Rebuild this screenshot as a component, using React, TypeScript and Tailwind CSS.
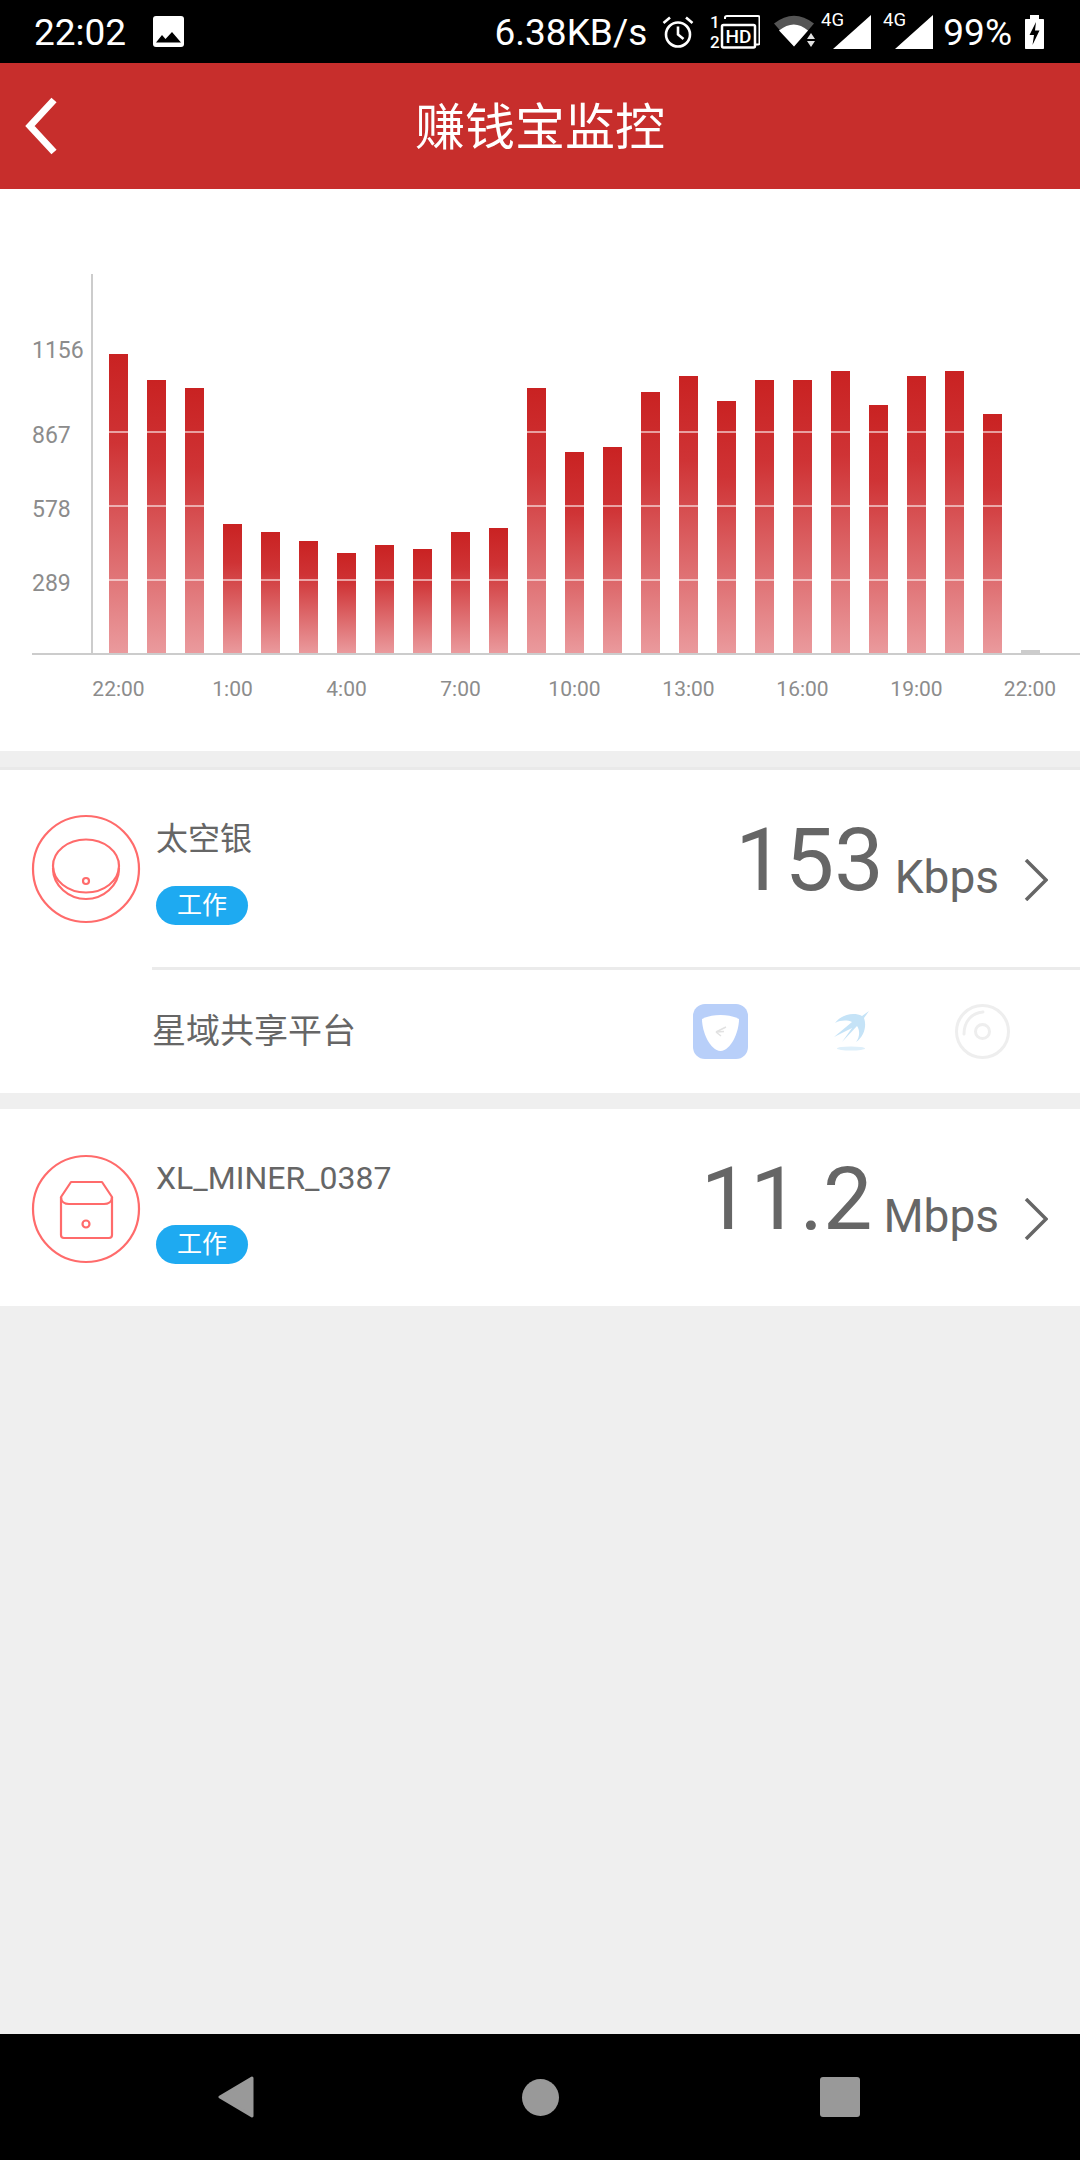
import React from 'react';

const BAR_TOPS = [354, 380, 388, 524, 532, 541, 553, 545, 549, 532, 528, 388, 452, 447, 392, 376, 401, 380, 380, 371, 405, 376, 371, 414];
const X_LABELS = ['22:00', '1:00', '4:00', '7:00', '10:00', '13:00', '16:00', '19:00', '22:00'];
const Y_LABELS = [
  { text: '1156', y: 358 },
  { text: '867', y: 443 },
  { text: '578', y: 517 },
  { text: '289', y: 591 },
];
const BASE_Y = 653;

const Chart = () => (
  <svg width="1080" height="562" viewBox="0 189 1080 562" className="block">
    <defs>
      <linearGradient id="barFill" x1="0" y1="0" x2="0" y2="1">
        <stop offset="0" stopColor="#c92222" />
        <stop offset="0.3" stopColor="#cf3335" />
        <stop offset="1" stopColor="#ea9a9d" />
      </linearGradient>
    </defs>
    {BAR_TOPS.map((top, i) => (
      <rect key={i} x={109 + i * 38} y={top} width="19" height={BASE_Y - top} fill="url(#barFill)" />
    ))}
    <rect x="1021" y="650" width="19" height="4" fill="#cccccc" />
    {[431, 505, 579].map((y) => (
      <rect key={y} x="93" y={y} width="910" height="2" fill="#ffffff" fillOpacity="0.55" />
    ))}
    <rect x="91" y="274" width="2" height="380" fill="#cccccc" />
    <rect x="32" y="653" width="1048" height="2" fill="#cccccc" />
    {Y_LABELS.map((l) => (
      <text key={l.text} x="32" y={l.y} fontSize="23" fill="#8c8c8c">{l.text}</text>
    ))}
    {X_LABELS.map((l, i) => (
      <text key={i} x={i === 8 ? 1030 : 118.5 + i * 114} y="695.5" fontSize="21" fill="#8c8c8c" textAnchor="middle">{l}</text>
    ))}
  </svg>
);

const ImageIcon = () => (
  <svg width="31" height="31" viewBox="0 0 31 31" className="ml-[27px]">
    <rect width="31" height="31" rx="3" fill="#ffffff" />
    <path d="M3 26.5L9 19L12.5 23L19 16L28 26.5Z" fill="#000000" />
  </svg>
);

const AlarmIcon = () => (
  <svg width="32" height="32" viewBox="0 0 32 32" fill="none" stroke="#ffffff" strokeWidth="2.6" className="ml-[15px]">
    <circle cx="16" cy="18.5" r="12" />
    <path d="M16 10.5V18.5L21.5 23" />
    <path d="M1.5 7L8 1.5M30.5 7L24 1.5" />
  </svg>
);

const DualHdIcon = () => (
  <svg width="50" height="42" viewBox="0 -4 50 42" className="ml-[16px]">
    <text x="0" y="13" fontSize="17" fontWeight="500" fill="#ffffff">1</text>
    <text x="0" y="33" fontSize="17" fontWeight="500" fill="#ffffff">2</text>
    <path d="M15 4V2.5C15 1.5 16 1 17 1H48C49 1 49.500 1.500 49.500 2.500V28C49.500 29 49 29.500 48 29.500H46" fill="none" stroke="#ffffff" strokeWidth="2" />
    <rect x="12" y="10" width="33" height="22.500" rx="1.500" fill="#000000" stroke="#ffffff" strokeWidth="2.500" />
    <text x="28.500" y="28" fontSize="19" fontWeight="500" fill="#ffffff" textAnchor="middle">HD</text>
  </svg>
);

const WifiIcon = () => (
  <svg width="42" height="33" viewBox="0 0 42 33" className="ml-[14px]">
    <path d="M0 8.500Q20 -7 40 8.500L31 19H31L20 31.500Z" fill="#555555" />
    <path d="M5 15.500Q20 3.500 34 15.500L20 31.500Z" fill="#ffffff" />
    <path d="M37 16L32 24H42Z" fill="#000000" />
    <path d="M37 18L33 24H41Z" fill="#e0e0e0" />
    <path d="M33 26H41L37 32Z" fill="#e0e0e0" />
  </svg>
);

const SignalIcon = ({ className }: { className: string }) => (
  <svg width="50" height="48" viewBox="0 -6 50 48" className={className}>
    <text x="0" y="12" fontSize="18.500" fill="#ffffff">4G</text>
    <path d="M50 1V35H12Z" fill="#ffffff" />
  </svg>
);

const BatteryIcon = () => (
  <svg width="19" height="34" viewBox="0 0 19 34" className="ml-[13px]">
    <path d="M5 0H14V4H18C18.600 4 19 4.400 19 5V33C19 33.600 18.600 34 18 34H1C0.400 34 0 33.600 0 33V5C0 4.400 0.400 4 1 4H5Z" fill="#ffffff" />
    <path d="M11 7L4.500 20H9L7.500 30L14.500 15.500H10Z" fill="#000000" />
  </svg>
);

const StatusBar = () => (
  <div className="h-[63px] bg-black flex items-center text-white shrink-0">
    <span className="ml-[34px] pt-[3px] text-[37px] leading-[60px]">22:02</span>
    <ImageIcon />
    <div className="ml-auto mr-[36px] flex items-center">
      <span className="pt-[3px] text-[37px] leading-[60px]">6.38KB/s</span>
      <AlarmIcon />
      <DualHdIcon />
      <WifiIcon />
      <SignalIcon className="ml-[5px]" />
      <SignalIcon className="ml-[12px]" />
      <span className="ml-[10px] pt-[3px] text-[37px] leading-[60px]">99%</span>
      <BatteryIcon />
    </div>
  </div>
);

const Header = () => (
  <div className="h-[126px] bg-[#c72e2c] flex items-center relative shrink-0">
    <svg width="40" height="66" viewBox="0 0 40 66" fill="none" stroke="#ffffff" strokeWidth="7" className="ml-[22px]">
      <path d="M32 7L8 33L32 59" />
    </svg>
    <div className="absolute inset-0 pt-[2px] text-center text-white text-[50px] leading-[126px]">赚钱宝监控</div>
  </div>
);

const DiscDevice = () => (
  <svg width="110" height="110" viewBox="0 0 110 110" fill="none" stroke="#ff6b6b" strokeWidth="2.200">
    <circle cx="55" cy="55" r="53" />
    <ellipse cx="55" cy="52" rx="33" ry="26.500" />
    <path d="M22 54C22 72 38 85 55 85C72 85 88 72 88 54" />
    <circle cx="55" cy="67" r="3" />
  </svg>
);

const BoxDevice = () => (
  <svg width="110" height="110" viewBox="0 0 110 110" fill="none" stroke="#ff6b6b" strokeWidth="2.200">
    <circle cx="55" cy="55" r="53" />
    <path d="M30 43L40 28H71L81 43V81C81 83 80 84 78 84H33C31 84 30 83 30 81Z" strokeLinejoin="round" />
    <path d="M30 43C30 48 34 50 38 50H73C77 50 81 48 81 43" />
    <circle cx="55" cy="70" r="3.500" />
  </svg>
);

const Chevron = () => (
  <svg width="24" height="42" viewBox="0 0 24 42" fill="none" stroke="#666666" strokeWidth="3.500" className="ml-[25px] mt-[43px] shrink-0">
    <path d="M2 1L22 21L2 41" />
  </svg>
);

const WorkBadge = () => (
  <div className="w-[92px] h-[39px] rounded-full bg-[#1eaaf1] text-white text-[25px] leading-[39px] text-center">工作</div>
);

interface DeviceRowProps {
  icon: React.ReactNode;
  iconClass: string;
  name: string;
  value: string;
  unit: string;
}

const DeviceRow: React.FC<DeviceRowProps> = ({ icon, iconClass, name, value, unit }) => (
  <div className="flex h-[197px] pt-[46px] text-[#666666]">
    <div className={`ml-[31px] w-[110px] shrink-0 ${iconClass}`}>{icon}</div>
    <div className="ml-[15px]">
      <div className="text-[32px] leading-[46px]">{name}</div>
      <div className="mt-[24px]"><WorkBadge /></div>
    </div>
    <div className="ml-auto flex items-end self-start h-[88px]">
      <span className="text-[88px] leading-[88px]">{value}</span>
      <span className="ml-[11px] mb-[4px] text-[46px] leading-[46px]">{unit}</span>
    </div>
    <Chevron />
    <div className="w-[32px] shrink-0" />
  </div>
);

const ShieldApp = () => (
  <svg width="55" height="55" viewBox="0 0 55 55">
    <rect width="55" height="55" rx="12" fill="#b8cff9" />
    <path d="M27.500 11C35 11 41 12.500 46 15C46 28 38 46.500 27.500 47C17 46.500 9 28 9 15C14 12.500 20 11 27.500 11Z" fill="#ffffff" />
    <path d="M33 23L23 28L31 27.500M23 28L28 32" fill="none" stroke="#e2e2e2" strokeWidth="1.500" />
  </svg>
);

const SwallowApp = () => (
  <svg width="36" height="42" viewBox="0 0 36 42">
    <path d="M35 0L28 5C20 1 8 3 1 12C7 9 13 9 18 11L0 26L18 17L8 31L23 15C26 19 26 26 22 31C30 26 33 15 30 7Z" fill="#c5e3f7" />
    <ellipse cx="17" cy="37.500" rx="14" ry="2" fill="#deeffa" />
  </svg>
);

const DiscApp = () => (
  <svg width="55" height="55" viewBox="0 0 55 55" fill="none" stroke="#eeeeee" strokeWidth="3">
    <circle cx="27.500" cy="27.500" r="26" />
    <circle cx="27.500" cy="27.500" r="7" />
    <path d="M9 30C9 18 16 9 28 8" strokeLinecap="round" />
  </svg>
);

const PlatformRow = () => (
  <div className="h-[126px] ml-[152px] border-t-[3px] border-[#ebebeb] flex items-center text-[#666666]">
    <span className="text-[34px]">星域共享平台</span>
    <div className="ml-[337px]"><ShieldApp /></div>
    <div className="ml-[86px]"><SwallowApp /></div>
    <div className="ml-[85px]"><DiscApp /></div>
  </div>
);

const NavBar = () => (
  <div className="h-[126px] bg-black flex items-center shrink-0">
    <svg width="36" height="42" viewBox="0 0 36 42" className="ml-[218px]">
      <path d="M34 2L2 21L34 40Z" fill="#999999" stroke="#999999" strokeWidth="3" strokeLinejoin="round" />
    </svg>
    <div className="ml-[268px] w-[37px] h-[37px] rounded-full bg-[#999999]" />
    <div className="ml-[261px] w-[40px] h-[40px] rounded-[3px] bg-[#999999]" />
  </div>
);

export default function App() {
  return (
    <div className="w-[1080px] h-[2160px] flex flex-col bg-[#efefef] font-[family-name:Roboto,'Noto_Sans_CJK_SC',sans-serif]">
      <StatusBar />
      <Header />
      <div className="bg-white shrink-0">
        <Chart />
      </div>
      <div className="mt-[16px] border-t-[3px] border-[#e9e9e9] bg-white shrink-0">
        <DeviceRow icon={<DiscDevice />} iconClass="-mt-[2px]" name="太空银" value="153" unit="Kbps" />
        <PlatformRow />
      </div>
      <div className="mt-[16px] bg-white shrink-0">
        <DeviceRow icon={<BoxDevice />} iconClass="-mt-[1px]" name="XL_MINER_0387" value="11.2" unit="Mbps" />
      </div>
      <div className="flex-1" />
      <NavBar />
    </div>
  );
}
